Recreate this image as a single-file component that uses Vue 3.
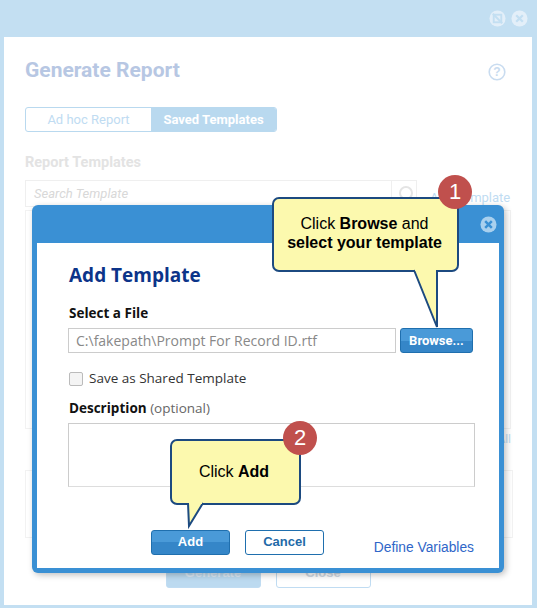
<script setup>
const tabs = [
  { label: 'Ad hoc Report', active: false },
  { label: 'Saved Templates', active: true },
]
</script>

<template>
  <div class="page">
    <header class="frame-head">
      <svg class="head-icon" viewBox="0 0 18 18">
        <circle cx="9" cy="9" r="8.5" fill="#e3eff9" />
        <rect x="5" y="5" width="8" height="8" fill="none" stroke="#c3dff2" stroke-width="2" />
        <path d="M4 4l10 10" stroke="#c3dff2" stroke-width="2" />
      </svg>
      <svg class="head-icon" viewBox="0 0 18 18">
        <circle cx="9" cy="9" r="8.5" fill="#e3eff9" />
        <path d="M5.5 5.5l7 7M12.5 5.5l-7 7" stroke="#c3dff2" stroke-width="2.4" />
      </svg>
    </header>

    <main class="report">
      <div class="report-title-row">
        <h1 class="report-title">Generate Report</h1>
        <svg class="help" viewBox="0 0 18 18">
          <circle cx="9" cy="9" r="7.8" fill="none" stroke="#c9dcf0" stroke-width="1.6" />
          <text x="9" y="13" text-anchor="middle" class="help-mark">?</text>
        </svg>
      </div>

      <div class="tabs">
        <div v-for="tab in tabs" :key="tab.label" class="tab" :class="{ active: tab.active }">{{ tab.label }}</div>
      </div>

      <h2 class="section-title">Report Templates</h2>

      <div class="search-row">
        <div class="search">
          <span class="search-text">Search Template</span>
          <span class="search-btn"><i class="lens"></i></span>
        </div>
        <span class="add-link">Add Template</span>
      </div>

      <div class="list-box"></div>
      <div class="all-link">All</div>
      <div class="detail-box"></div>

      <div class="report-actions">
        <span class="ghost primary">Generate</span>
        <span class="ghost">Close</span>
      </div>
    </main>

    <section class="modal">
      <div class="modal-head">
        <svg class="modal-close" viewBox="0 0 18 18">
          <circle cx="9" cy="9" r="8.5" fill="#a9d0ee" />
          <path d="M5.5 5.5l7 7M12.5 5.5l-7 7" stroke="#3a90d4" stroke-width="2.6" />
        </svg>
      </div>
      <div class="modal-body">
        <h2 class="modal-title">Add Template</h2>
        <label class="field-label">Select a File</label>
        <div class="file-row">
          <div class="file-input">C:\fakepath\Prompt For Record ID.rtf</div>
          <button class="btn btn-blue browse">Browse...</button>
        </div>
        <div class="check-row">
          <span class="checkbox"></span>
          <span>Save as Shared Template</span>
        </div>
        <label class="field-label desc-label">Description <span class="optional">(optional)</span></label>
        <div class="desc-box"></div>
        <div class="modal-actions">
          <button class="btn btn-blue add">Add</button>
          <button class="btn btn-line">Cancel</button>
          <a class="define">Define Variables</a>
        </div>
      </div>
    </section>

    <div class="callout callout-browse">
      <span>Click <b>Browse</b> and<br /><b>select your template</b></span>
      <svg class="tip tip-browse" viewBox="0 0 26 60">
        <path d="M1 0L24 57V0" fill="#fcf9ae" stroke="#1c4a80" stroke-width="2" />
        <path d="M2 -3H23V1H2Z" fill="#fcf9ae" />
      </svg>
      <span class="badge badge-browse">1</span>
    </div>

    <div class="callout callout-add">
      <span>Click <b>Add</b></span>
      <svg class="tip tip-add" viewBox="0 0 18 26">
        <path d="M1 0L2 23L16 0" fill="#fcf9ae" stroke="#1c4a80" stroke-width="2" />
        <path d="M2 -3H15V1H2Z" fill="#fcf9ae" />
      </svg>
      <span class="badge badge-add">2</span>
    </div>
  </div>
</template>

<style scoped>
.page {
  position: relative;
  width: 537px;
  height: 608px;
  overflow: hidden;
  background: #c3dff2;
  font-family: "Liberation Sans", Arial, sans-serif;
}

.frame-head {
  height: 37px;
  display: flex;
  justify-content: flex-end;
  align-items: center;
  gap: 5px;
  padding: 0 9px 0 0;
  box-sizing: border-box;
}

.head-icon {
  width: 17px;
  height: 17px;
}

.report {
  box-sizing: border-box;
  margin-left: 4px;
  width: 528px;
  height: 568px;
  padding: 21px 19px 0 21px;
  background: #fff;
}

.report-title-row {
  display: flex;
  justify-content: space-between;
  align-items: center;
  height: 24px;
  padding-right: 7px;
}

.report-title {
  margin: 0;
  font-family: Roboto, sans-serif;
  font-size: 21px;
  font-weight: 700;
  color: #b7c7e3;
}

.help {
  width: 18px;
  height: 18px;
  margin-top: 3px;
}

.help-mark {
  font-family: "Liberation Sans", sans-serif;
  font-size: 12px;
  font-weight: 700;
  fill: #c9dcf0;
}

.tabs {
  display: flex;
  width: 252px;
  height: 25px;
  margin-top: 25px;
  border: 1px solid #b9d9ef;
  border-radius: 3px;
  box-sizing: border-box;
  overflow: hidden;
}

.tab {
  display: flex;
  align-items: center;
  justify-content: center;
  width: 125px;
  font-family: Roboto, sans-serif;
  font-size: 13px;
  color: #c0dcf2;
}

.tab.active {
  flex: 1;
  background: #b9d9ef;
  color: #fff;
  font-weight: 700;
}

.section-title {
  margin: 22px 0 0;
  font-family: Roboto, sans-serif;
  font-size: 14.5px;
  font-weight: 700;
  line-height: 17px;
  color: #e3e3e3;
}

.search-row {
  display: flex;
  height: 27px;
  margin-top: 9px;
}

.search {
  flex: none;
  box-sizing: border-box;
  display: flex;
  justify-content: space-between;
  width: 392px;
  height: 27px;
  border: 1px solid #efefef;
}

.search-text {
  padding: 5px 0 0 8px;
  font-family: Roboto, sans-serif;
  font-size: 13px;
  font-style: italic;
  color: #d8d8d8;
}

.search-btn {
  width: 24px;
  border-left: 1px solid #efefef;
  position: relative;
}

.lens {
  position: absolute;
  left: 7px;
  top: 5px;
  width: 10px;
  height: 10px;
  border: 2px solid #e4e4e4;
  border-radius: 50%;
}

.add-link {
  flex: none;
  margin: 10px 0 0 13px;
  font-family: Roboto, sans-serif;
  font-size: 13px;
  white-space: nowrap;
  color: #c0dcf2;
}

.list-box {
  box-sizing: border-box;
  width: 486px;
  height: 219px;
  margin-top: 3px;
  border: 1px solid #f2f2f2;
}

.all-link {
  width: 486px;
  text-align: right;
  margin-top: 2px;
  font-size: 13px;
  line-height: 15px;
  color: #c0dcf2;
}

.detail-box {
  box-sizing: border-box;
  width: 488px;
  height: 68px;
  margin-top: 24px;
  border: 1px solid #f2f2f2;
}

.report-actions {
  display: flex;
  gap: 15px;
  justify-content: center;
  margin-top: 20px;
  padding-right: 2px;
}

.ghost {
  box-sizing: border-box;
  width: 95px;
  height: 30px;
  border: 1px solid #c0dcf2;
  border-radius: 3px;
  text-align: center;
  font-size: 13px;
  font-weight: 700;
  line-height: 28px;
  color: #cfd9e4;
}

.ghost.primary {
  background: #bcdaf0;
  color: #dbe9f5;
}

.modal {
  position: absolute;
  left: 32px;
  top: 205px;
  width: 472px;
  height: 368px;
  display: flex;
  flex-direction: column;
  box-sizing: border-box;
  border-radius: 6px;
  background: #3a90d4;
  padding: 0 5px 5px;
  box-shadow: 2px 2px 6px rgba(0, 0, 0, 0.25);
}

.modal-head {
  height: 38px;
  flex: none;
  display: flex;
  justify-content: flex-end;
  align-items: center;
  padding-right: 2px;
}

.modal-close {
  width: 17px;
  height: 17px;
  margin-top: 1px;
}

.modal-body {
  flex: 1;
  min-height: 0;
  background: #fff;
  padding: 18px 24px 0 31px;
  font-family: "Open Sans", sans-serif;
}

.modal-title {
  margin: 0;
  padding-left: 1px;
  font-size: 19px;
  line-height: 28px;
  font-weight: 700;
  color: #0c3489;
}

.field-label {
  display: block;
  margin-top: 15px;
  padding-left: 1px;
  font-size: 13.5px;
  line-height: 19px;
  font-weight: 700;
  color: #111;
}

.file-row {
  display: flex;
  gap: 4px;
  margin-top: 5px;
}

.file-input {
  box-sizing: border-box;
  width: 328px;
  height: 25px;
  padding-left: 7px;
  border: 1px solid #ccc;
  font-size: 14px;
  line-height: 23px;
  color: #888;
}

.btn {
  box-sizing: border-box;
  height: 25px;
  border-radius: 3px;
  font-family: "Liberation Sans", Arial, sans-serif;
  font-size: 13px;
  font-weight: 700;
  padding: 0 0 2px;
}

.btn-blue {
  border: 1px solid #1f6fae;
  color: #fff;
  background: linear-gradient(#4a9ad8 0 50%, #3586c8 50% 100%);
}

.browse {
  width: 73px;
  font-family: Roboto, sans-serif;
  padding: 0;
}

.check-row {
  display: flex;
  align-items: center;
  gap: 6px;
  margin-top: 16px;
  font-size: 13.5px;
  line-height: 19px;
  color: #333;
}

.checkbox {
  box-sizing: border-box;
  width: 14px;
  height: 14px;
  margin-left: 1px;
  border: 1px solid #bbb;
  border-radius: 2px;
  background: #f4f4f4;
}

.desc-label {
  margin-top: 11px;
}

.optional {
  font-weight: 400;
  color: #666;
}

.desc-box {
  box-sizing: border-box;
  width: 407px;
  height: 64px;
  margin-top: 5px;
  border: 1px solid #ccc;
  border-bottom-color: #ddd;
}

.modal-actions {
  display: flex;
  align-items: flex-start;
  margin-top: 43px;
  padding-left: 83px;
}

.add {
  width: 79px;
}

.btn-line {
  width: 79px;
  margin-left: 15px;
  border: 1px solid #1f6fae;
  background: #fff;
  color: #1f6aa8;
}

.define {
  margin: 10px 1px 0 auto;
  font-family: "Liberation Sans", Arial, sans-serif;
  font-size: 13.8px;
  line-height: 16px;
  white-space: nowrap;
  color: #2f66c8;
}

.callout {
  position: absolute;
  box-sizing: border-box;
  display: flex;
  align-items: center;
  justify-content: center;
  text-align: center;
  border: 2px solid #1c4a80;
  border-radius: 7px;
  background: #fcf9ae;
  font-size: 16px;
  line-height: 19px;
  color: #000;
}

.callout-browse {
  left: 272px;
  top: 197px;
  width: 187px;
  height: 75px;
  padding: 0 2px 4px 0;
}

.callout-add {
  left: 170px;
  top: 439px;
  width: 131px;
  height: 66px;
  padding: 0 3px 2px 0;
}

.tip {
  position: absolute;
  overflow: visible;
}

.tip-browse {
  left: 139px;
  top: 71px;
  width: 26px;
  height: 60px;
}

.tip-add {
  left: 15px;
  top: 62px;
  width: 18px;
  height: 26px;
}

.badge {
  position: absolute;
  width: 34px;
  height: 34px;
  border-radius: 50%;
  background: #c0504d;
  color: #fff;
  font-size: 22px;
  line-height: 34px;
  text-align: center;
}

.badge-browse {
  left: 164px;
  top: -24px;
}

.badge-add {
  left: 111px;
  top: -20px;
}
</style>
